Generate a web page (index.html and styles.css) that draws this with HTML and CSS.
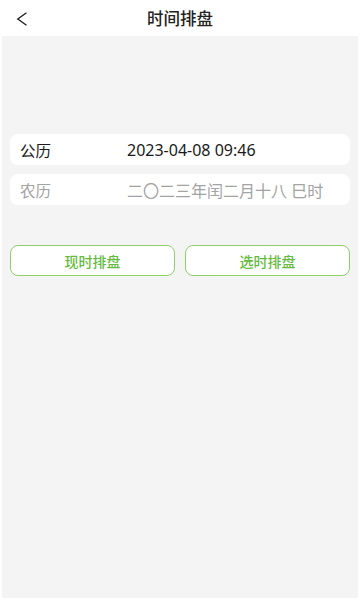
FILE: index.html
```html
<!DOCTYPE html>
<html lang="zh">
<head>
<meta charset="utf-8">
<link rel="stylesheet" href="styles.css">
</head>
<body>
<div class="app">
  <header class="nav">
    <span class="back">
      <svg width="12" height="14" viewBox="0 0 12 14"><path d="M10.5 0.8 L1.8 7 L10.5 13.2" fill="none" stroke="#222" stroke-width="1.4" stroke-linejoin="miter"/></svg>
    </span>
    <h1 class="title">时间排盘</h1>
  </header>
  <main class="content">
    <div class="rows">
      <div class="row">
        <span class="label">公历</span>
        <span class="value">2023-04-08 09:46</span>
      </div>
      <div class="row muted">
        <span class="label">农历</span>
        <span class="value">二〇二三年闰二月十八 巳时</span>
      </div>
    </div>
    <div class="actions">
      <button class="btn">现时排盘</button>
      <button class="btn">选时排盘</button>
    </div>
  </main>
</div>
</body>
</html>
```
FILE: styles.css
```css
* { box-sizing: border-box; }
html, body {
  margin: 0;
  padding: 0;
  background: #fff;
  font-family: "Noto Sans CJK SC", "Noto Sans", sans-serif;
}
.app {
  height: 600px;
  display: flex;
  flex-direction: column;
}
.nav {
  height: 36px;
  flex: none;
  display: flex;
  align-items: center;
  justify-content: center;
  position: relative;
  background: #fff;
}
.back {
  position: absolute;
  left: 16px;
  top: 12px;
  display: flex;
}
.title {
  margin: 0;
  font-size: 16.5px;
  font-weight: 500;
  color: #222;
  line-height: 1;
  padding-top: 1px;
}
.content {
  flex: 1;
  margin: 0 2px 2px;
  background: #f4f4f4;
  padding: 98px 8px 0;
}
.rows {
  display: flex;
  flex-direction: column;
  gap: 9px;
}
.row {
  height: 31px;
  background: #fff;
  border-radius: 8px;
  display: flex;
  align-items: center;
  padding-left: 10px;
  font-size: 15.5px;
  color: #1a1a1a;
}
.row .label {
  width: 107px;
  flex: none;
}
.row .value {
  font-family: "Noto Sans", "Noto Sans CJK SC", sans-serif;
  font-size: 16px;
}
.row.muted { color: #a3a3a3; }
.actions {
  margin-top: 40px;
  display: flex;
  gap: 10px;
}
.btn {
  flex: 1;
  height: 31px;
  background: #fff;
  border: 1.5px solid #8dd06a;
  border-radius: 8px;
  color: #66bb3f;
  font-family: inherit;
  font-size: 14px;
  font-weight: 500;
  padding: 0;
}
```
